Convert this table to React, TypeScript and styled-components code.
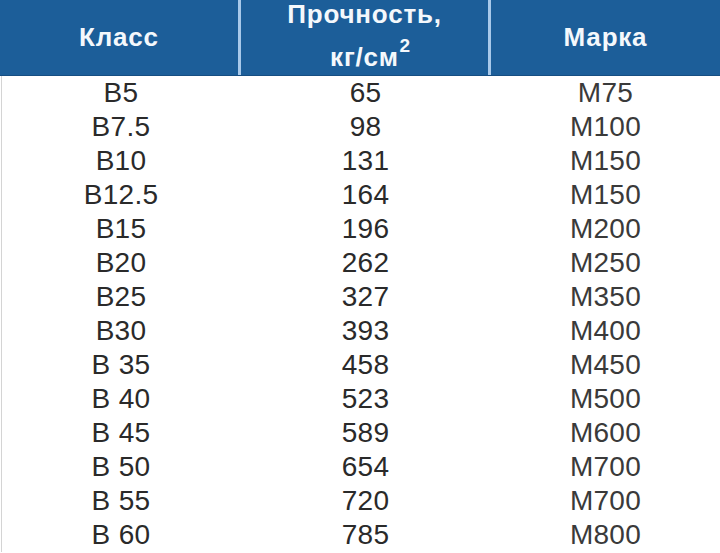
import React from 'react'
import styled, { createGlobalStyle } from 'styled-components'

const GlobalStyle = createGlobalStyle`
  html, body {
    margin: 0;
    padding: 0;
    background: #ffffff;
  }
  body {
    font-family: "Liberation Sans", Arial, sans-serif;
  }
`

interface Row {
  cls: string
  strength: string
  grade: string
}

const rows: Row[] = [
  { cls: 'B5', strength: '65', grade: 'M75' },
  { cls: 'B7.5', strength: '98', grade: 'M100' },
  { cls: 'B10', strength: '131', grade: 'M150' },
  { cls: 'B12.5', strength: '164', grade: 'M150' },
  { cls: 'B15', strength: '196', grade: 'M200' },
  { cls: 'B20', strength: '262', grade: 'M250' },
  { cls: 'B25', strength: '327', grade: 'M350' },
  { cls: 'B30', strength: '393', grade: 'M400' },
  { cls: 'B 35', strength: '458', grade: 'M450' },
  { cls: 'B 40', strength: '523', grade: 'M500' },
  { cls: 'B 45', strength: '589', grade: 'M600' },
  { cls: 'B 50', strength: '654', grade: 'M700' },
  { cls: 'B 55', strength: '720', grade: 'M700' },
  { cls: 'B 60', strength: '785', grade: 'M800' },
]

const App: React.FC = () => {
  return (
    <>
      <GlobalStyle />
      <StyledTable>
        <StyledHead>
          <StyledHeadCell>Класс</StyledHeadCell>
          <StyledHeadCell divided>
            <StyledHeadStack>
              <StyledHeadLine>Прочность,</StyledHeadLine>
              <StyledHeadLine second>
                кг/см<StyledSup>2</StyledSup>
              </StyledHeadLine>
            </StyledHeadStack>
          </StyledHeadCell>
          <StyledHeadCell divided>Марка</StyledHeadCell>
        </StyledHead>
        <StyledBody>
          {rows.map((r) => (
            <StyledRow key={r.cls}>
              <StyledCell>{r.cls}</StyledCell>
              <StyledCell>{r.strength}</StyledCell>
              <StyledCell muted>{r.grade}</StyledCell>
            </StyledRow>
          ))}
        </StyledBody>
      </StyledTable>
    </>
  )
}

const StyledTable = styled.div`
  width: 720px;
  height: 553px;
  overflow: hidden;
  display: flex;
  flex-direction: column;
`

const StyledHead = styled.div`
  display: grid;
  grid-template-columns: 238px 250px 1fr;
  height: 76px;
  background: #1c5e99;
  border-bottom: 1px solid #164e82;
  box-sizing: border-box;
`

const StyledHeadCell = styled.div<{ divided?: boolean }>`
  display: flex;
  align-items: center;
  justify-content: center;
  color: #f4f8fc;
  font-weight: bold;
  font-size: 26px;
  letter-spacing: 0.8px;
  border-left: ${(props) => (props.divided ? '3px solid #a8c9ea' : 'none')};
`

const StyledHeadStack = styled.div`
  display: flex;
  flex-direction: column;
  align-items: center;
  margin-top: -4px;
`

const StyledHeadLine = styled.span<{ second?: boolean }>`
  display: block;
  line-height: 29px;
  margin-top: ${(props) => (props.second ? '14px' : '0')};
  position: relative;
`

const StyledSup = styled.span`
  position: absolute;
  top: -12px;
  right: -12px;
  font-size: 19px;
`

const StyledBody = styled.div`
  display: flex;
  flex-direction: column;
  border-left: 1px solid #d4d4d4;
  margin-left: 1px;
`

const StyledRow = styled.div`
  display: grid;
  grid-template-columns: 238px 251px 1fr;
  height: 34px;
  align-items: center;
`

const StyledCell = styled.div<{ muted?: boolean }>`
  text-align: center;
  font-size: 28px;
  letter-spacing: 0.3px;
  color: ${(props) => (props.muted ? '#3a3a3a' : '#2a2a2a')};
  line-height: 34px;
`

export default App
